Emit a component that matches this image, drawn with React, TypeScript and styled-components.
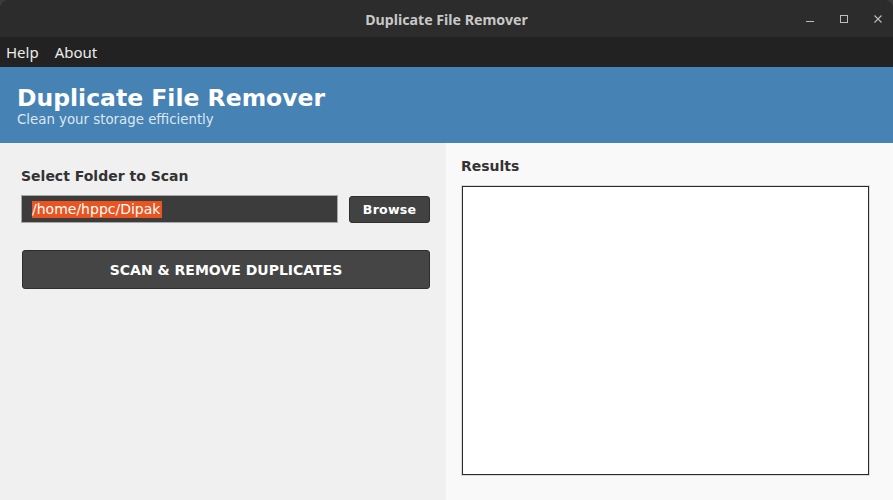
import React from "react";
import styled, { createGlobalStyle } from "styled-components";

const Global = createGlobalStyle`
  html, body { margin: 0; padding: 0; background: #3a3a3a; }
  #root { width: 893px; height: 500px; }
  * { box-sizing: border-box; }
`;

const Window = styled.div`
  width: 893px;
  height: 500px;
  display: flex;
  flex-direction: column;
  overflow: hidden;
  border-radius: 9px 9px 0 0;
  background: #2c2c2c;
`;

const TitleBar = styled.div`
  height: 37px;
  flex: none;
  display: grid;
  grid-template-columns: 1fr auto 1fr;
  align-items: center;
  background: #2c2c2c;
  color: #c8c8c8;
  font-family: "Noto Sans", "DejaVu Sans", sans-serif;
  font-weight: 700;
  font-size: 14.2px;
`;

const Title = styled.div`
  grid-column: 2;
  padding-top: 1px;
`;

const Controls = styled.div`
  grid-column: 3;
  justify-self: end;
  display: flex;
  align-items: center;
  gap: 26px;
  padding-right: 11px;
  height: 100%;
`;

const CtrlIcon = styled.svg`
  width: 8px;
  height: 8px;
  display: block;
  color: #bdbdbd;
`;

const MenuBar = styled.div`
  height: 30px;
  flex: none;
  display: flex;
  align-items: center;
  gap: 16px;
  padding-left: 6px;
  background: #222222;
  color: #ececec;
  font-family: "Noto Sans", "DejaVu Sans", sans-serif;
  font-size: 15px;
`;

const MenuItem = styled.span`
  line-height: 1;
  padding-top: 0;
`;

const Header = styled.header`
  height: 76px;
  flex: none;
  background: #4682b4;
  padding: 17px 17px 0;
  font-family: "DejaVu Sans", sans-serif;
`;

const AppTitle = styled.h1`
  margin: 0;
  font-size: 23.5px;
  line-height: 28px;
  font-weight: 700;
  color: #ffffff;
`;

const Subtitle = styled.div`
  font-size: 13.33px;
  line-height: 15px;
  color: #dde7f1;
`;

const Body = styled.div`
  flex: 1;
  display: grid;
  grid-template-columns: 446px 1fr;
  font-family: "DejaVu Sans", sans-serif;
`;

const LeftPanel = styled.section`
  background: #f0f0f0;
  padding: 25px 16px 0 21px;
  display: flex;
  flex-direction: column;
`;

const RightPanel = styled.section`
  background: #f9f9f9;
  padding: 15px 23px 25px 15px;
  display: flex;
  flex-direction: column;
`;

const Label = styled.div`
  font-size: 14px;
  line-height: 17px;
  font-weight: 700;
  color: #333333;
`;

const Row = styled.div`
  display: flex;
  align-items: center;
  gap: 11px;
  margin-top: 10px;
`;

const Entry = styled.div`
  width: 317px;
  height: 28px;
  background: #3c3c3c;
  border: 1px solid #a8a8a8;
  display: flex;
  align-items: center;
  padding-left: 10px;
  font-size: 14px;
`;

const Selected = styled.span`
  background: #e95420;
  color: #ffffff;
  line-height: 17px;
  padding-right: 2px;
`;

const SmallButton = styled.button`
  width: 81px;
  height: 27px;
  background: #424242;
  border: 1px solid #2e2e2e;
  border-radius: 3px;
  color: #ffffff;
  font-family: "DejaVu Sans", sans-serif;
  font-weight: 700;
  font-size: 12.6px;
  padding: 0;
  letter-spacing: 0.2px;
`;

const BigButton = styled.button`
  margin-top: 27px;
  margin-left: 1px;
  width: 408px;
  height: 39px;
  background: #454545;
  border: 1px solid #2e2e2e;
  border-radius: 3px;
  color: #ffffff;
  font-family: "DejaVu Sans", sans-serif;
  font-weight: 700;
  font-size: 14px;
  padding: 0;
`;

const ResultsBox = styled.div`
  margin-top: 11px;
  flex: 1;
  background: #ffffff;
  border: 1px solid #2a2a2a;
  box-shadow: 0 0 0 1px #dadada;
  margin-left: 1px;
  margin-right: 1px;
`;

export default function App() {
  return (
    <>
      <Global />
      <Window>
        <TitleBar>
          <Title>Duplicate File Remover</Title>
          <Controls>
            <CtrlIcon viewBox="0 0 8 8">
              <line x1="0" y1="6.5" x2="8" y2="6.5" stroke="currentColor" strokeWidth="1" />
            </CtrlIcon>
            <CtrlIcon viewBox="0 0 8 8">
              <rect x="0.5" y="0.5" width="7" height="7" fill="none" stroke="currentColor" strokeWidth="1" />
            </CtrlIcon>
            <CtrlIcon viewBox="0 0 8 8">
              <path d="M0.5 0.5 L7.5 7.5 M7.5 0.5 L0.5 7.5" stroke="currentColor" strokeWidth="1.1" />
            </CtrlIcon>
          </Controls>
        </TitleBar>
        <MenuBar>
          <MenuItem>Help</MenuItem>
          <MenuItem>About</MenuItem>
        </MenuBar>
        <Header>
          <AppTitle>Duplicate File Remover</AppTitle>
          <Subtitle>Clean your storage efficiently</Subtitle>
        </Header>
        <Body>
          <LeftPanel>
            <Label>Select Folder to Scan</Label>
            <Row>
              <Entry>
                <Selected>/home/hppc/Dipak</Selected>
              </Entry>
              <SmallButton>Browse</SmallButton>
            </Row>
            <BigButton>SCAN &amp; REMOVE DUPLICATES</BigButton>
          </LeftPanel>
          <RightPanel>
            <Label>Results</Label>
            <ResultsBox />
          </RightPanel>
        </Body>
      </Window>
    </>
  );
}
